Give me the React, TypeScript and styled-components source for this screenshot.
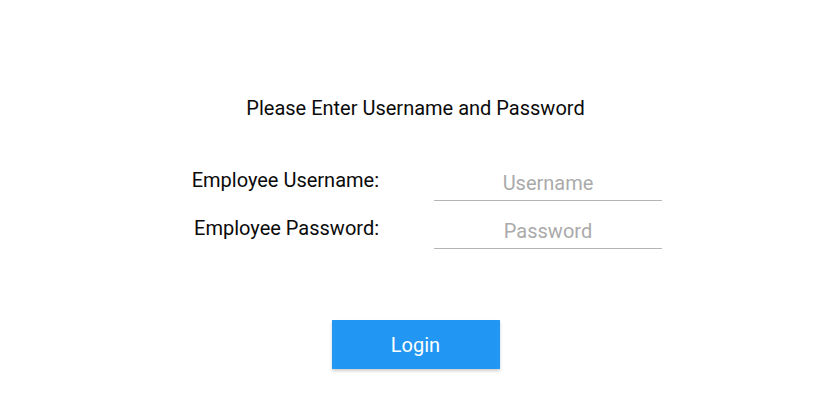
import React from "react";
import styled, { createGlobalStyle } from "styled-components";

const Global = createGlobalStyle`
  html, body { margin: 0; padding: 0; background: #fff; }
  body { font-family: Roboto, "Noto Sans", Arial, sans-serif; color: #111; }
`;

const Page = styled.div`
  width: 814px;
  height: 418px;
  display: flex;
  flex-direction: column;
  align-items: center;
  padding: 94px 0 0 17px;
  box-sizing: border-box;
`;

const Title = styled.h1`
  margin: 0;
  font-size: 20px;
  font-weight: 400;
  line-height: 28px;
  color: #0a0a0a;
`;

const Form = styled.div`
  margin-top: 31px;
  display: grid;
  grid-template-columns: 210px 228px;
  column-gap: 55px;
`;

const Label = styled.label`
  box-sizing: border-box;
  font-size: 20px;
  line-height: 42px;
  height: 48px;
  padding-top: 6px;
  text-align: right;
  color: #0a0a0a;
`;

const Input = styled.input`
  box-sizing: border-box;
  width: 228px;
  height: 48px;
  border: none;
  border-bottom: 1.5px solid #b5b5b5;
  outline: none;
  background: transparent;
  font-family: Roboto, Arial, sans-serif;
  font-size: 20px;
  text-align: center;
  padding: 12px 0 0;
  color: #111;
  &::placeholder { color: #aaaaaa; }
`;

const Button = styled.button`
  margin-top: 71px;
  width: 168px;
  height: 49px;
  border: none;
  background: #2196f3;
  color: #fff;
  font-family: Roboto, Arial, sans-serif;
  font-size: 20px;
  box-shadow: 0 2px 3px rgba(0, 0, 0, 0.2);
  cursor: pointer;
`;

export default function App() {
  return (
    <>
      <Global />
      <Page>
        <Title>Please Enter Username and Password</Title>
        <Form>
          <Label>Employee Username:</Label>
          <Input placeholder="Username" />
          <Label>Employee Password:</Label>
          <Input placeholder="Password" type="password" />
        </Form>
        <Button>Login</Button>
      </Page>
    </>
  );
}
